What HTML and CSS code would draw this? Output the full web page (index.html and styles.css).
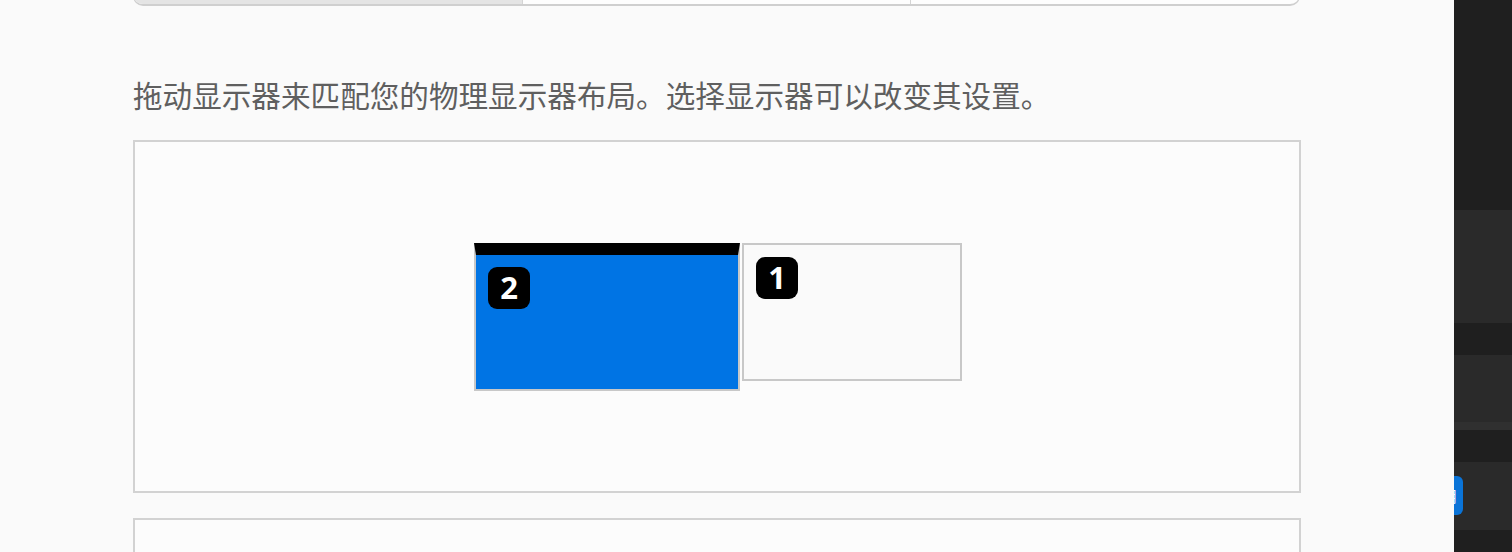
FILE: index.html
```html
<!DOCTYPE html>
<html lang="zh-CN">
<head>
    <meta charset="UTF-8">
    <title>显示器</title>
    <link rel="stylesheet" href="styles.css">
</head>
<body>

    <div class="page">
        <div class="main">
            <div class="modes">
                <div class="mode selected"></div>
                <div class="mode"></div>
                <div class="mode"></div>
            </div>

            <p class="hint">拖动显示器来匹配您的物理显示器布局。选择显示器可以改变其设置。</p>

            <div class="arrangement">
                <div class="monitors">
                    <div class="monitor primary">
                        <span class="badge">2</span>
                    </div>
                    <div class="monitor">
                        <span class="badge">1</span>
                    </div>
                </div>
            </div>

            <div class="settings"></div>
        </div>

        <div class="side">
            <div class="band top"></div>
            <div class="band row"></div>
            <div class="band gap"></div>
            <div class="band row second"></div>
            <div class="band gap"></div>
            <div class="band row third">
                <span class="apply">应用</span>
            </div>
            <div class="band gap last"></div>
        </div>
    </div>

</body>
</html>
```

FILE: styles.css
```css
body { margin: 0; background-color: #fafafa; font-family: "Noto Sans CJK SC", "Noto Sans", sans-serif; overflow: hidden; }
.page { display: flex; height: 552px; }
.main { width: 1454px; flex-shrink: 0; padding-left: 133px; box-sizing: border-box; position: relative; z-index: 1; background-color: #fafafa; }
.modes { display: flex; width: 1167px; height: 40px; margin-top: -34px; border: 1px solid #cfcfcf; border-bottom-width: 2px; border-radius: 0 0 10px 10px; overflow: hidden; background-color: #fdfdfd; box-sizing: border-box; }
.mode { flex: 1; border-left: 1px solid #d4d4d4; }
.mode:first-child { border-left: none; }
.mode.selected { background-color: #e4e4e4; }
.hint { margin: 66px 0 23px; font-size: 29.6px; line-height: 45px; color: #5f5f5f; }
.arrangement { display: flex; align-items: center; justify-content: center; width: 1168px; height: 353px; padding-left: 2px; border: 2px solid #d2d2d2; background-color: #fcfcfc; box-sizing: border-box; }
.monitors { display: flex; align-items: flex-start; gap: 2px; }
.monitor { width: 220px; height: 138px; padding: 12px; border: 2px solid #c8c8c8; background-color: #fafafa; box-sizing: border-box; }
.monitor.primary { width: 266px; height: 148px; border-top: 12px solid #000; background-color: #0074e4; }
.badge { display: flex; align-items: center; justify-content: center; width: 42px; height: 42px; border-radius: 9px; background-color: #000; color: #fff; font-family: "Open Sans", sans-serif; font-weight: 700; font-size: 31px; line-height: 1; }
.settings { width: 1168px; height: 60px; margin-top: 25px; border: 2px solid #d2d2d2; background-color: #fcfcfc; box-sizing: border-box; }
.side { flex: 1; display: flex; flex-direction: column; background-color: #1f1f1f; }
.band { flex-shrink: 0; }
.band.top { height: 210px; }
.band.row { height: 113px; background-color: #2a2a2a; }
.band.gap { height: 32px; }
.band.row.second { height: 67px; border-bottom: 8px solid #303030; }
.band.row.third { height: 68px; position: relative; }
.band.gap.last { height: 22px; }
.apply { position: absolute; left: -40px; top: 14px; width: 49px; height: 39px; padding-right: 6px; border-radius: 6px; background-color: #0a74d8; color: #fff; font-size: 15px; line-height: 39px; text-align: right; box-sizing: border-box; }
```
